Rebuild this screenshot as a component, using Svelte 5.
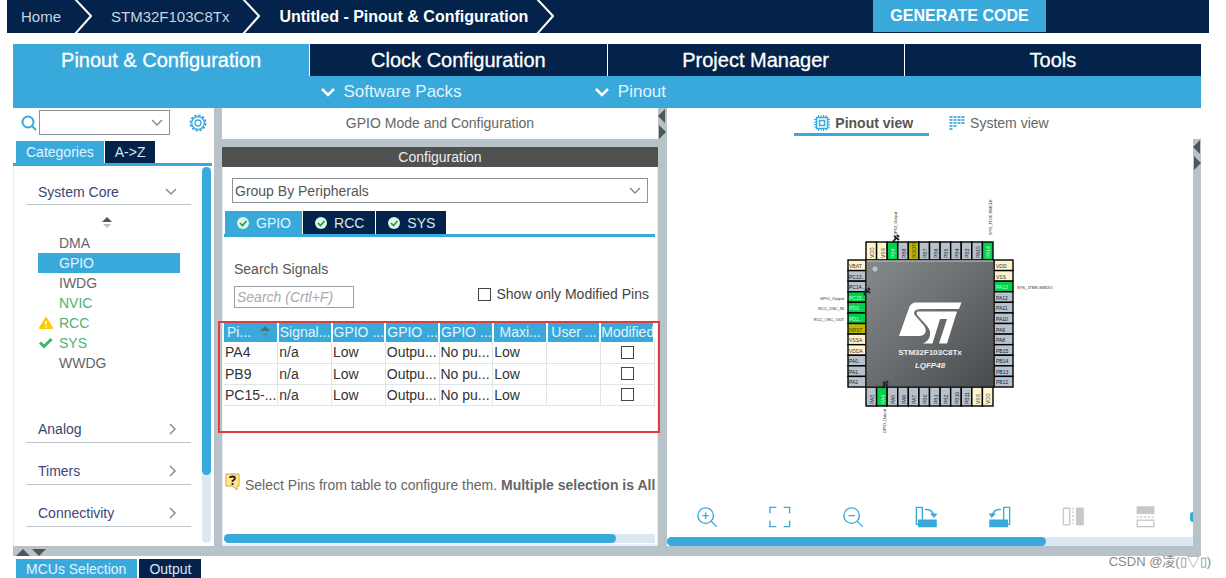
<script>
  const mainTabs = [
    "Pinout & Configuration",
    "Clock Configuration",
    "Project Manager",
    "Tools"
  ];
  const peripherals = [
    { name: "DMA" },
    { name: "GPIO" },
    { name: "IWDG" },
    { name: "NVIC", state: "set" },
    { name: "RCC", state: "set", icon: "warning" },
    { name: "SYS", state: "set", icon: "check" },
    { name: "WWDG" }
  ];
  const closedGroups = ["Analog", "Timers", "Connectivity"];
  const configTabs = ["GPIO", "RCC", "SYS"];
  const columns = [
    "Signal...",
    "GPIO ...",
    "GPIO ...",
    "GPIO ...",
    "Maxi...",
    "User ..."
  ];
  const rows = [
    { pin: "PA4", modified: false },
    { pin: "PB9", modified: false },
    { pin: "PC15-...", modified: false }
  ];
  const tools = [
    "Zoom in",
    "Best fit",
    "Zoom out",
    "Rotate clockwise",
    "Rotate counter clockwise",
    "Flip horizontal",
    "Flip vertical"
  ];

  // pins are written as name:kind, v = power, g = assigned, b = boot/reset
  const parse = list =>
    list.split(" ").map(p => {
      const [name, kind] = p.split(":");
      return { name, kind: kind || "n" };
    });
  const leftPins = parse(
    "VBAT:v PC13.. PC14.. PC15..:g PD0..:g PD1..:g NRST:b VSSA:v VDDA:v PA0.. PA1 PA2"
  );
  const rightPins = parse(
    "VDD:v VSS:v PA13:g PA12 PA11 PA10 PA9 PA8 PB15 PB14 PB13 PB12"
  );
  const topPins = parse(
    "VDD:v VSS:v PB9:g PB8 BOOT0:b PB7 PB6 PB5 PB4 PB3 PA15 PA14:g"
  );
  const bottomPins = parse(
    "PA3 PA4:g PA5 PA6 PA7 PB0 PB1 PB2 PB10 PB11 VSS:v VDD:v"
  );
  const pitch = 127 / 12;
  const fills = { v: "#fff3cd", g: "#05d04b", b: "#bdb800", n: "#b7c2cc" };
  const inks = { v: "#333", g: "#c8ffd8", b: "#444400", n: "#222" };

  let activeTab = mainTabs[0];
  let activeItem = "GPIO";
  let activeConfig = "GPIO";
  let onlyModified = false;
  let search = "";
</script>

<div class="page">
  <header class="topbar">
    <nav class="crumbs">
      <a href="#home">Home</a>
      <svg width="18" height="33" viewBox="0 0 18 33"><path d="M1 -1 L17 16 L1 34" /></svg>
      <a href="#device">STM32F103C8Tx</a>
      <svg width="18" height="33" viewBox="0 0 18 33"><path d="M1 -1 L17 16 L1 34" /></svg>
      <a href="#project" class="current">Untitled - Pinout &amp; Configuration</a>
      <svg width="18" height="33" viewBox="0 0 18 33"><path d="M1 -1 L17 16 L1 34" /></svg>
    </nav>
    <button class="generate">GENERATE CODE</button>
  </header>

  <div class="main-tabs">
    {#each mainTabs as tab}
      <button class:active={tab === activeTab} on:click={() => (activeTab = tab)}>{tab}</button>
    {/each}
  </div>
  <div class="subbar">
    <button>
      <svg width="16" height="10" viewBox="0 0 16 10"><path d="M2 2 L8 8 L14 2" /></svg>
      Software Packs
    </button>
    <button>
      <svg width="16" height="10" viewBox="0 0 16 10"><path d="M2 2 L8 8 L14 2" /></svg>
      Pinout
    </button>
  </div>

  <div class="workspace">
    <aside class="sidebar">
      <div class="finder">
        <svg class="lens" width="16" height="16" viewBox="0 0 16 16"><circle cx="7" cy="7" r="5.5" /><path d="M11 11 L15 15" /></svg>
        <div class="select finder-select">
          <select aria-label="Find peripheral"><option></option></select>
          <svg width="12" height="8" viewBox="0 0 12 8"><path d="M1 1 L6 6 L11 1" /></svg>
        </div>
        <button class="gear" aria-label="Settings">
          <svg width="18" height="18" viewBox="0 0 18 18">
            <circle cx="9" cy="9" r="7.6" stroke-width="1.8" stroke-dasharray="2.4 1.58" />
            <circle cx="9" cy="9" r="6.3" />
            <circle cx="9" cy="9" r="3" />
          </svg>
        </button>
      </div>
      <div class="tabs side-tabs">
        <button class="active">Categories</button>
        <button>A-&gt;Z</button>
      </div>
      <div class="tree">
        <div class="groups">
          <button class="group">
            System Core
            <svg width="12" height="8" viewBox="0 0 12 8"><path d="M1 1 L6 6 L11 1" /></svg>
          </button>
          <div class="sorter">
            <svg width="10" height="12" viewBox="0 0 10 12"><path d="M0 5 L5 0 L10 5Z" fill="#555" /><path d="M1 7 L5 11 L9 7Z" fill="#bbb" /></svg>
          </div>
          <ul>
            {#each peripherals as item}
              <li>
                <button
                  class={item.state}
                  class:selected={item.name === activeItem}
                  on:click={() => (activeItem = item.name)}>
                  <span class="mark">
                    {#if item.icon === "warning"}
                      <svg width="14" height="12" viewBox="0 0 14 12"><path d="M7 1 L13 11 H1Z" fill="#fc0" stroke="#fc0" stroke-width="2" stroke-linejoin="round" /><path d="M7 4 V7.500 M7 9 V10.500" stroke="#fff" stroke-width="1.600" /></svg>
                    {:else if item.icon === "check"}
                      <svg width="14" height="12" viewBox="0 0 14 12"><path d="M1 5.500 L5 9.500 L12.500 2" fill="none" stroke="#3cb371" stroke-width="3" /></svg>
                    {/if}
                  </span>
                  {item.name}
                </button>
              </li>
            {/each}
          </ul>
          {#each closedGroups as group}
            <button class="group">
              {group}
              <svg width="8" height="12" viewBox="0 0 8 12"><path d="M1 1 L6 6 L1 11" /></svg>
            </button>
          {/each}
        </div>
        <div class="vscroll"><div></div></div>
      </div>
    </aside>

    <div class="splitter"></div>

    <section class="config">
      <h2>GPIO Mode and Configuration</h2>
      <h3>Configuration</h3>
      <div class="config-body">
        <div class="select group-select">
          <select aria-label="Grouping"><option>Group By Peripherals</option></select>
          <svg width="12" height="8" viewBox="0 0 12 8"><path d="M1 1 L6 6 L11 1" /></svg>
        </div>
        <div class="tabs config-tabs">
          {#each configTabs as tab}
            <button class:active={tab === activeConfig} on:click={() => (activeConfig = tab)}>
              <svg width="12" height="12" viewBox="0 0 12 12"><circle cx="6" cy="6" r="6" fill="#d9f7e3" /><path d="M3 6 L5.500 8.500 L9.500 4" fill="none" stroke="#1d9a50" stroke-width="1.600" /></svg>
              {tab}
            </button>
          {/each}
        </div>
        <div class="filters">
          <div class="search">
            <label for="signals">Search Signals</label>
            <input id="signals" type="text" placeholder="Search (Crtl+F)" bind:value={search} />
          </div>
          <label class="only">
            <input type="checkbox" bind:checked={onlyModified} />
            Show only Modified Pins
          </label>
        </div>
        <div class="pins">
          <table>
            <thead>
              <tr>
                <th>
                  <span class="sorted">Pi...
                    <svg width="10" height="12" viewBox="0 0 10 12"><path d="M0 5 L5 0 L10 5Z" fill="#47707f" /><path d="M1 7 L5 11 L9 7Z" fill="#5195b3" /></svg>
                  </span>
                </th>
                {#each columns as column, i}
                  <th class:centered={i > 3}>{column}</th>
                {/each}
                <th class="last">Modified</th>
              </tr>
            </thead>
            <tbody>
              {#each rows as row}
                <tr>
                  <td>{row.pin}</td>
                  <td>n/a</td>
                  <td>Low</td>
                  <td>Outpu...</td>
                  <td>No pu...</td>
                  <td>Low</td>
                  <td></td>
                  <td class="tick"><input type="checkbox" aria-label="Modified" bind:checked={row.modified} /></td>
                </tr>
              {/each}
            </tbody>
          </table>
        </div>
        <p class="hint">
          <svg width="15" height="18" viewBox="0 0 15 18"><path d="M1 1 H14 V13 H12 V17 L8 13 H1Z" fill="#ffe788" stroke="#c9a94a" /><path d="M5 5 Q5 3.500 7.500 3.500 Q10 3.500 10 5.300 Q10 6.600 7.500 8 V9 M7.500 10 V12" fill="none" stroke="#222" stroke-width="1.800" /></svg>
          <span>Select Pins from table to configure them. <b>Multiple selection is All</b></span>
        </p>
        <div class="hscroll"><div class="config-thumb"></div></div>
      </div>
    </section>

    <div class="splitter arrows">
      <svg width="8" height="32" viewBox="0 0 8 32"><path d="M7 1 V15 L0 8Z M1 17 V31 L8 24Z" /></svg>
    </div>

    <section class="view">
      <div class="view-tabs">
        <button class="active">
          <svg width="16" height="16" viewBox="0 0 16 16" fill="none" stroke="#39a9dc"><path d="M4.500 0 V16 M7 0 V16 M9.500 0 V16 M12 0 V16 M0 4.500 H16 M0 7 H16 M0 9.500 H16 M0 12 H16" /><rect x="2.500" y="2.500" width="11" height="11" fill="#fff" stroke-width="1.500" /><rect x="5.500" y="5.500" width="5" height="5" stroke-width="1.500" /></svg>
          Pinout view
        </button>
        <button>
          <svg width="16" height="16" viewBox="0 0 16 16" fill="none" stroke="#58b4df" stroke-width="3" stroke-dasharray="2 1"><path d="M2 1 V15 M6 1 V12 M10 1 V9 M14 1 V9" /></svg>
          System view
        </button>
      </div>

      <div class="canvas">
        <svg class="chip" width="260" height="250" viewBox="0 0 260 250">
          <defs>
            <linearGradient id="body" x1="0" y1="0" x2="1" y2="1">
              <stop offset="0" stop-color="#858a8d" />
              <stop offset="0.5" stop-color="#696d70" />
              <stop offset="1" stop-color="#47494b" />
            </linearGradient>
          </defs>
          {#each leftPins as pin, i}
            <g transform="translate(48 {70 + i * pitch})">
              <rect width="18" height={pitch} fill={fills[pin.kind]} stroke="#000" stroke-width="1.400" />
              <text x="1" y="8" fill={inks[pin.kind]}>{pin.name}</text>
            </g>
          {/each}
          {#each rightPins as pin, i}
            <g transform="translate(194 {70 + i * pitch})">
              <rect width="19" height={pitch} fill={fills[pin.kind]} stroke="#000" stroke-width="1.400" />
              <text x="2" y="8" fill={inks[pin.kind]}>{pin.name}</text>
            </g>
          {/each}
          {#each topPins as pin, i}
            <g transform="translate({66 + i * pitch} 70) rotate(-90)">
              <rect width="18" height={pitch} fill={fills[pin.kind]} stroke="#000" stroke-width="1.400" />
              <text x="2" y="8" fill={inks[pin.kind]}>{pin.name}</text>
            </g>
          {/each}
          {#each bottomPins as pin, i}
            <g transform="translate({66 + i * pitch} 216) rotate(-90)">
              <rect width="19" height={pitch} fill={fills[pin.kind]} stroke="#000" stroke-width="1.400" />
              <text x="2" y="8" fill={inks[pin.kind]}>{pin.name}</text>
            </g>
          {/each}
          <rect x="66" y="70" width="128" height="127" fill="url(#body)" stroke="#111" />
          <path d="M67 71 H193" stroke="#c4c9cc" />
          <circle cx="75" cy="79" r="2" fill="#aeb9bf" stroke="#ccd5da" />
          <g fill="#fff">
            <path d="M99 146 L109 118 Q111 112.500 116 112.500 H161.500 L159 119 H121 C115 119 112 122 115.500 126 L123 134.500 C128 140 126 146 119 146Z" />
            <path d="M118 121.500 H157 L147 153.500 H139 L147 129 H140 L132.500 153.500 H123 C131 150 132 142 127.500 136.500 L119 127 C116 123.500 116 122 118 121.500Z" />
          </g>
          <text class="part" x="130" y="165">STM32F103C8Tx</text>
          <text class="package" x="130" y="178">LQFP48</text>
          <g class="signals">
            <text x="44" y="110" text-anchor="end">GPIO_Output</text>
            <text x="44" y="120" text-anchor="end">RCC_OSC_IN</text>
            <text x="44" y="131" text-anchor="end">RCC_OSC_OUT</text>
            <text x="217" y="99">SYS_JTMS-SWDIO</text>
            <text transform="translate(97 46) rotate(-90)">GPIO_Output</text>
            <text transform="translate(192 45) rotate(-90)">SYS_JTCK-SWCLK</text>
            <text transform="translate(86 219) rotate(-90)" text-anchor="end">GPIO_Output</text>
          </g>
          {#each [[96, 48], [67, 101], [85, 194]] as [x, y]}
            <path transform="translate({x} {y})" d="M-3 4 L0 0 M-2 -2 L3 2 M1 -3 L3 -1" stroke="#222" stroke-width="2" />
          {/each}
        </svg>
      </div>

      <div class="toolbar">
        {#each tools as tool, i}
          <button aria-label={tool} class:off={i > 4}>
            <svg width="22" height="22" viewBox="0 0 24 24">
              {#if i === 0 || i === 2}
                <circle cx="10.500" cy="10.500" r="8.500" />
                <path d="M16.500 16.500 L22.500 22.500 M7 10.500 H14" />
                {#if i === 0}<path d="M10.500 7 V14" />{/if}
              {:else if i === 1}
                <path d="M1 8 V1.500 H8 M16 1.500 H22.500 V8 M22.500 16 V22.500 H16 M8 22.500 H1 V16" />
              {:else if i === 3 || i === 4}
                <g transform={i === 4 ? "translate(24 0) scale(-1 1)" : undefined}>
                  <path d="M4 20 H1.500 V1.500 H8 V15" />
                  <path d="M4 15.500 H23 V22.500 H4Z" class="solid" />
                  <path d="M11 4 Q19 3 20.500 11 M18 9 H23 L21 12Z" />
                </g>
              {:else}
                <g transform={i === 6 ? "rotate(-90 12 12)" : undefined}>
                  <rect x="1.500" y="2.500" width="7" height="18" />
                  <path d="M12 2 V21" stroke-dasharray="2 2" />
                  <rect x="16" y="2.500" width="7" height="18" class="solid" />
                </g>
              {/if}
            </svg>
          </button>
        {/each}
        <span class="cut"></span>
      </div>
      <div class="hscroll"><div class="view-thumb"></div></div>
    </section>

    <div class="splitter arrows edge">
      <svg width="8" height="32" viewBox="0 0 8 32"><path d="M7 1 V15 L0 8Z M1 17 V31 L8 24Z" /></svg>
    </div>
  </div>

  <div class="drawer-handle">
    <svg width="32" height="7" viewBox="0 0 32 7"><path d="M1 7 L8 0 L15 7Z M17 0 H31 L24 7Z" /></svg>
  </div>
  <footer>
    <div class="tabs bottom-tabs">
      <button class="active">MCUs Selection</button>
      <button>Output</button>
    </div>
    <span class="credit">CSDN @凌(▯▽▯)</span>
  </footer>
</div>

<style>
  :global(body) {
    background: #fff;
  }
  .page {
    --navy: #03234b;
    --blue: #39a9dc;
    --grey: #b7c3c9;
    display: flex;
    flex-direction: column;
    min-height: 100vh;
    font: 14px/20px "Liberation Sans", "Noto Sans CJK SC", sans-serif;
    color: #555;
    overflow: hidden;
  }
  .page * {
    box-sizing: border-box;
  }
  svg {
    flex: none;
  }
  button,
  select,
  input {
    margin: 0;
    padding: 0;
    border: 0;
    border-radius: 0;
    background: none;
    font: inherit;
    color: inherit;
  }
  .topbar {
    display: flex;
    height: 33px;
    margin: 0 17px 11px 7px;
    padding-left: 14px;
    background: var(--navy);
  }
  .crumbs {
    display: flex;
    align-items: center;
  }
  .crumbs a {
    margin-right: 13px;
    color: #c8d3e0;
    font-size: 15px;
    text-decoration: none;
    white-space: nowrap;
  }
  .crumbs a.current {
    margin-right: 8px;
    color: #fff;
    font-size: 16px;
    font-weight: bold;
  }
  .crumbs svg {
    margin-right: 19px;
    fill: none;
    stroke: #fff;
    stroke-width: 2;
  }
  .generate {
    width: 173px;
    height: 32px;
    margin: 0 163px 0 auto;
    background: var(--blue);
    color: #fff;
    font-size: 16px;
    font-weight: bold;
  }
  .main-tabs {
    display: grid;
    grid-template-columns: repeat(4, 1fr);
    gap: 1px;
    margin: 0 25px 0 13px;
  }
  .main-tabs button {
    height: 32px;
    background: var(--navy);
    color: #fff;
    font-size: 20px;
    -webkit-text-stroke: 0.3px #fff;
  }
  .main-tabs button.active {
    background: var(--blue);
  }
  .subbar {
    display: flex;
    gap: 15%;
    height: 32px;
    margin: 0 25px 0 13px;
    padding-left: 25%;
    background: var(--blue);
  }
  .subbar button {
    display: flex;
    align-items: center;
    gap: 8px;
    color: #e4f4fc;
    font-size: 17px;
  }
  .subbar svg {
    fill: none;
    stroke: #fff;
    stroke-width: 2.5;
  }
  .workspace {
    flex: 1;
    display: grid;
    grid-template-columns: 201px 8px minmax(0, 436fr) 9px minmax(0, 526fr) 8px;
    margin: 0 25px 0 13px;
  }
  .splitter {
    background: var(--grey);
  }
  .arrows svg {
    display: block;
    fill: #50555a;
  }
  .edge {
    margin-top: 31px;
  }

  .sidebar {
    display: flex;
    flex-direction: column;
  }
  .finder {
    display: flex;
    align-items: center;
    padding: 2px 7px 6px 8px;
  }
  .lens,
  .gear svg {
    display: block;
    fill: none;
    stroke: var(--blue);
    stroke-width: 2;
  }
  .gear svg {
    stroke-width: 1.3;
  }
  .select {
    position: relative;
    border: 1px solid #8e9499;
    background: #fff;
  }
  .select select {
    display: block;
    width: 100%;
    height: 23px;
    padding-left: 2px;
    appearance: none;
  }
  .select svg {
    position: absolute;
    right: 6px;
    top: 8px;
    pointer-events: none;
  }
  .select svg,
  .group svg {
    fill: none;
    stroke: #858585;
    stroke-width: 1.4;
  }
  .finder-select {
    width: 131px;
    margin: 0 auto 0 2px;
  }
  .tabs {
    display: flex;
    gap: 1px;
  }
  .tabs button {
    display: flex;
    align-items: center;
    height: 22px;
    padding: 0 10px;
    background: var(--navy);
    color: #dce5ef;
    white-space: nowrap;
  }
  .tabs button.active {
    background: var(--blue);
    color: #e4f4fc;
  }
  .side-tabs {
    margin-right: 2px;
    padding-left: 3px;
    border-bottom: 3px solid var(--blue);
  }
  .tree {
    flex: 1;
    display: flex;
    justify-content: space-between;
    padding: 1px 3px 3px 12px;
    border: solid #e6eef1;
    border-width: 0 0 0 1px;
  }
  .groups {
    width: 165px;
  }
  .group {
    display: flex;
    align-items: center;
    justify-content: space-between;
    width: 100%;
    height: 42px;
    padding: 14px 14px 0 12px;
    border-bottom: 1px solid #bcc6ca;
    color: #3c4678;
  }
  .group:first-child {
    height: 38px;
    padding-top: 12px;
  }
  .sorter {
    display: flex;
    justify-content: center;
    height: 28px;
    padding: 12px 3px 0 0;
  }
  ul {
    margin: 0 0 28px;
    padding: 0 11px 0 12px;
    list-style: none;
  }
  li button {
    display: flex;
    align-items: center;
    width: 100%;
    height: 20px;
    padding-left: 1px;
    color: #666;
  }
  li .set {
    color: #4cb276;
  }
  li .selected {
    background: var(--blue);
    color: #e4f4fc;
  }
  .mark {
    display: flex;
    width: 20px;
  }
  .vscroll {
    width: 9px;
    border-radius: 5px;
    background: #dbe8f4;
  }
  .vscroll div {
    height: 82%;
    border-radius: 5px;
    background: var(--blue);
  }

  .config {
    display: flex;
    flex-direction: column;
    min-width: 0;
  }
  h2,
  h3 {
    margin: 0;
    font-size: 14px;
    font-weight: normal;
    text-align: center;
  }
  h2 {
    padding: 5px 0 6px;
    color: #666;
  }
  h3 {
    border-top: 8px solid var(--grey);
    background: #505250;
    color: #eee;
  }
  .config-body {
    flex: 1;
    display: flex;
    flex-direction: column;
    padding: 11px 2px 1px 1px;
    border: solid #e9f0f3;
    border-width: 0 1px 2px;
  }
  .group-select {
    margin: 0 7px 8px 8px;
    color: #555;
  }
  .config-tabs {
    padding-left: 1px;
    border-bottom: 3px solid var(--blue);
  }
  .config-tabs button {
    gap: 7px;
    height: 23px;
    padding: 0 11px 0 12px;
  }
  .filters {
    display: flex;
    align-items: flex-end;
    justify-content: space-between;
    margin: 22px 6px 14px 10px;
  }
  .search {
    display: flex;
    flex-direction: column;
    gap: 7px;
  }
  .search input {
    width: 120px;
    height: 22px;
    padding: 0 2px;
    border: 1px solid #9aa0a5;
  }
  .search input::placeholder {
    color: #aaa;
    font-style: italic;
  }
  .only {
    display: flex;
    align-items: center;
    gap: 5px;
    padding-bottom: 4px;
    color: #444;
  }
  input[type="checkbox"] {
    width: 13px;
    height: 13px;
    appearance: none;
    border: 1px solid #444;
    background: #fff;
  }
  input[type="checkbox"]:checked {
    background: var(--blue);
  }
  .pins {
    position: relative;
    height: 111px;
  }
  /* callout frame around the pin table, runs over both splitters */
  .pins::after {
    content: "";
    position: absolute;
    inset: -1px -5px 0 -6px;
    border: 2px solid #e23b3f;
    pointer-events: none;
  }
  table {
    width: 100%;
    table-layout: fixed;
    border-collapse: collapse;
    color: #333;
  }
  th,
  td {
    height: 21px;
    padding: 0 0 0 1px;
    overflow: hidden;
    border-right: 1px solid #dfe4e7;
    font-weight: normal;
    line-height: 20px;
    text-align: left;
    white-space: nowrap;
  }
  th {
    height: 20px;
    border-right: 2px solid #fff;
    background: var(--blue);
    color: #e4f4fc;
  }
  th.centered,
  th.last {
    text-align: center;
  }
  th.last {
    padding: 0;
  }
  td {
    border-bottom: 1px solid #dfe4e7;
  }
  .sorted {
    display: flex;
    align-items: center;
    justify-content: space-between;
    padding: 0 7px 0 2px;
  }
  .tick {
    text-align: center;
  }
  .tick input {
    display: block;
    margin: 0 auto;
  }
  .hint {
    display: flex;
    gap: 5px;
    margin: 40px 0 auto 1px;
    white-space: nowrap;
    color: #666;
  }
  .hint span {
    padding-top: 2px;
  }
  .hscroll {
    height: 9px;
    border-radius: 5px 0 0 5px;
    background: #dbe8f4;
  }
  .hscroll div {
    height: 100%;
    border-radius: 5px;
    background: var(--blue);
  }
  .config-thumb {
    width: 91%;
  }
  .view-thumb {
    width: 72%;
  }

  .view {
    display: flex;
    flex-direction: column;
    min-width: 0;
  }
  .view-tabs {
    display: flex;
    justify-content: center;
    padding-right: 2px;
  }
  .view-tabs button {
    display: flex;
    align-items: center;
    gap: 5px;
    height: 28px;
    padding: 4px 15px 0 20px;
    border-bottom: 3px solid transparent;
    color: #666;
  }
  .view-tabs .active {
    padding: 4px 16px 0 20px;
    border-color: var(--blue);
    color: #555;
    font-weight: bold;
  }
  .canvas {
    flex: 1;
    display: flex;
    justify-content: center;
    align-items: flex-start;
    padding-top: 54px;
  }
  .chip text {
    font-size: 5px;
  }
  .chip .signals text {
    font-size: 4px;
    fill: #222;
  }
  .chip .part,
  .chip .package {
    fill: #eee;
    font-size: 8px;
    font-weight: bold;
    text-anchor: middle;
  }
  .chip .package {
    font-style: italic;
  }
  .toolbar {
    display: flex;
    align-items: center;
    justify-content: space-between;
    height: 42px;
    margin-bottom: -1px;
    padding-left: 29px;
    overflow: hidden;
  }
  .toolbar svg {
    display: block;
    fill: none;
    stroke: var(--blue);
    stroke-width: 1.5;
  }
  .toolbar .solid {
    fill: var(--blue);
  }
  .toolbar .off svg {
    stroke: #c8c8c8;
  }
  .toolbar .off .solid {
    fill: #c8c8c8;
  }
  .cut {
    width: 3px;
    height: 10px;
    margin-left: -18px;
    border-radius: 5px 0 0 5px;
    background: var(--blue);
  }
  .drawer-handle {
    height: 10px;
    margin: 0 25px 0 13px;
    padding: 3px 2px 0;
    background: var(--grey);
  }
  .drawer-handle svg {
    display: block;
    fill: #50555a;
  }
  footer {
    display: flex;
    align-items: flex-end;
    justify-content: space-between;
    height: 22px;
    padding: 0 15px 0 16px;
  }
  .bottom-tabs {
    gap: 2px;
  }
  .bottom-tabs button {
    height: 19px;
  }
  .bottom-tabs button.active {
    padding-right: 11px;
  }
  .credit {
    color: #888;
    font-size: 13px;
    line-height: 32px;
  }
</style>
